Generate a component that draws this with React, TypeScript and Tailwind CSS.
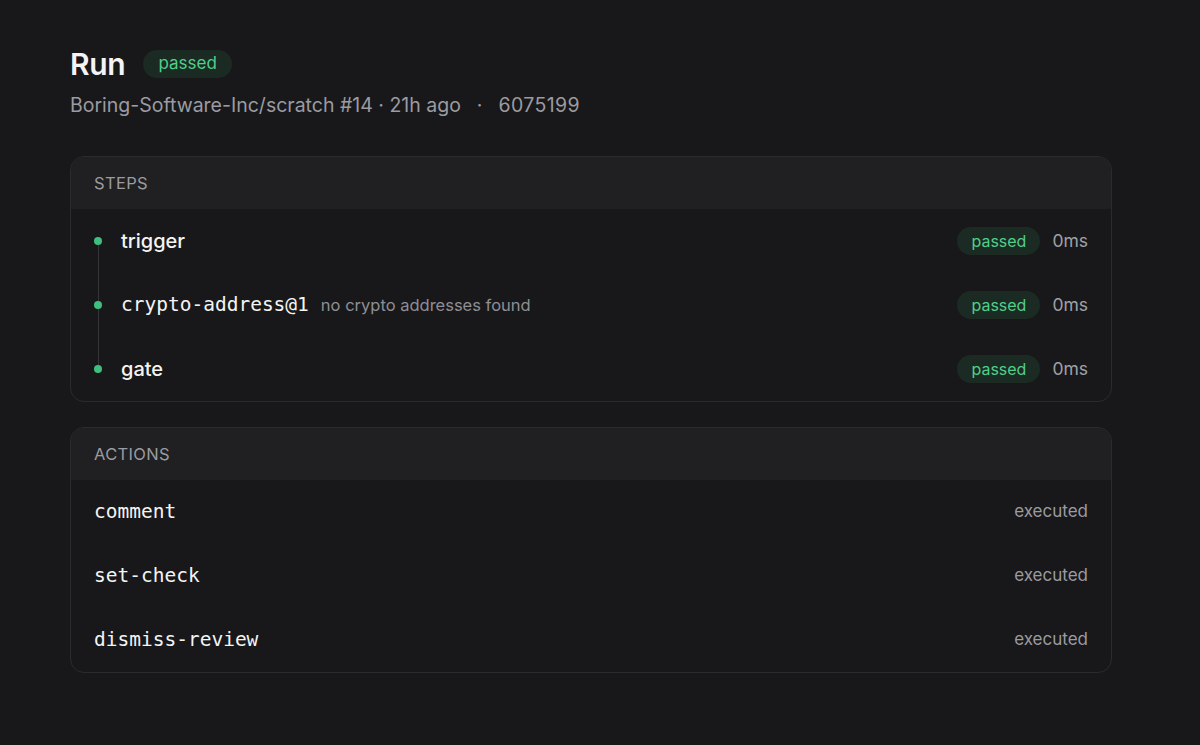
const steps = [
  { name: 'trigger', mono: false, note: '' },
  { name: 'crypto-address@1', mono: true, note: 'no crypto addresses found' },
  { name: 'gate', mono: false, note: '' },
]

const actions = ['comment', 'set-check', 'dismiss-review']

function Badge({ big }: { big?: boolean }) {
  return (
    <span
      className={
        big
          ? 'inline-flex h-[28px] items-center rounded-full bg-[#1b2a22] px-[15px] text-[17px] text-[#4fcf8a]'
          : 'inline-flex h-[28px] items-center rounded-full bg-[#1b2a22] px-[14px] text-[16px] text-[#4fcf8a]'
      }
    >
      passed
    </span>
  )
}

export default function App() {
  return (
    <div className="min-h-[745px] bg-[#18181a] px-[70px] pt-[46px] font-['Inter',sans-serif] text-[#f4f4f5]">
      <div className="flex items-center gap-[18px]">
        <h1 className="text-[30px] font-semibold leading-[36px] tracking-[-0.01em]">Run</h1>
        <Badge big />
      </div>
      <div className="mt-[9px] flex items-center text-[19.5px] leading-[28px] text-[#9b9ba1]">
        <span>Boring-Software-Inc/scratch #14 · 21h ago</span>
        <span className="mx-[16px]">·</span>
        <span className="tracking-[0.02em]">6075199</span>
      </div>

      <div className="mt-[37px] w-[1042px] overflow-hidden rounded-[14px] border border-[#2b2b2e]">
        <div className="flex h-[52px] items-center bg-[#202022] px-[23px] text-[16.5px] tracking-[0.02em] text-[#9b9ba1]">
          STEPS
        </div>
        <div className="relative px-[23px]">
          <div className="absolute left-[27px] top-[32px] h-[128px] w-px bg-[#36363a]" />
          {steps.map((s) => (
            <div key={s.name} className="flex h-[64px] items-center">
              <span className="relative z-10 h-[8px] w-[8px] rounded-full bg-[#3fbf7f]" />
              <span
                className={
                  s.mono
                    ? "ml-[19px] font-['DejaVu_Sans_Mono',monospace] text-[19.5px] text-[#f4f4f5]"
                    : 'ml-[19px] text-[20px] font-medium text-[#f4f4f5]'
                }
              >
                {s.name}
              </span>
              {s.note && <span className="ml-[12px] text-[16.5px] text-[#8e8e94]">{s.note}</span>}
              <div className="ml-auto flex items-center gap-[12px]">
                <Badge />
                <span className="text-[17.5px] text-[#a1a1a7]">0ms</span>
              </div>
            </div>
          ))}
        </div>
      </div>

      <div className="mt-[25px] w-[1042px] overflow-hidden rounded-[14px] border border-[#2b2b2e]">
        <div className="flex h-[52px] items-center bg-[#202022] px-[23px] text-[16.5px] tracking-[0.02em] text-[#9b9ba1]">
          ACTIONS
        </div>
        {actions.map((a) => (
          <div key={a} className="flex h-[64px] items-center px-[23px]">
            <span className="font-['DejaVu_Sans_Mono',monospace] text-[19.5px] text-[#f4f4f5]">{a}</span>
            <span className="ml-auto text-[17px] text-[#9b9ba1]">executed</span>
          </div>
        ))}
      </div>
    </div>
  )
}
